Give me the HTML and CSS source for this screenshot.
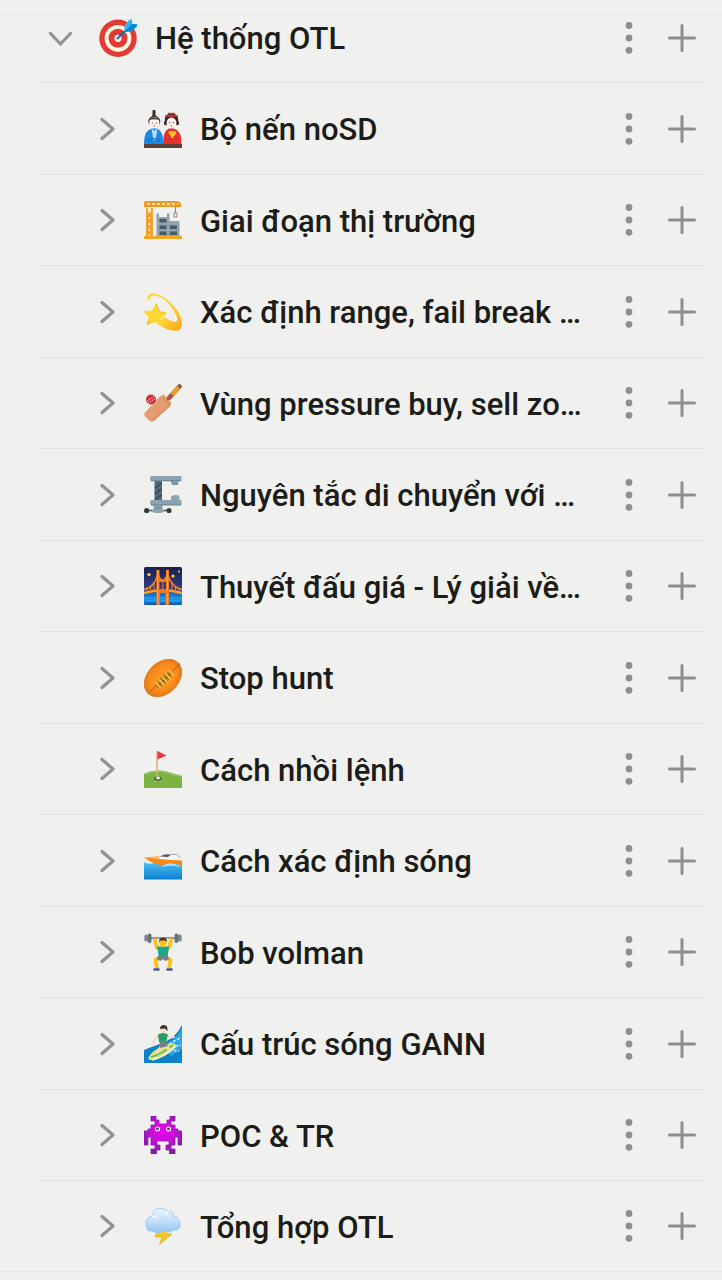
FILE: index.html
```html
<!DOCTYPE html>
<html lang="vi">
<head>
<meta charset="utf-8">
<meta name="viewport" content="width=device-width, initial-scale=1">
<title>Hệ thống OTL</title>
<link rel="stylesheet" href="styles.css">
</head>
<body>
<svg class="sprite" aria-hidden="true">
  <symbol id="right" viewBox="0 0 24 24"><path d="M6 2.500L17 12 6 21.500" fill="none" stroke="currentColor" stroke-width="3.400" stroke-linecap="round" stroke-linejoin="round"/></symbol>
  <symbol id="down" viewBox="0 0 24 24"><path d="M2.500 7.500L12.500 18 22.500 7.500" fill="none" stroke="currentColor" stroke-width="3.200" stroke-linecap="round" stroke-linejoin="round"/></symbol>
  <symbol id="dots" viewBox="0 0 24 36"><g fill="currentColor"><circle cx="12" cy="5.500" r="3.400"/><circle cx="12" cy="18" r="3.400"/><circle cx="12" cy="30.300" r="3.400"/></g></symbol>
  <symbol id="plus" viewBox="0 0 28 28"><path d="M14 1.500v25M1.500 14h25" fill="none" stroke="currentColor" stroke-width="3" stroke-linecap="round"/></symbol>
  <linearGradient id="swoosh" x1="0" y1="0" x2="1" y2="1"><stop offset="0" stop-color="#fdd835"/><stop offset=".6" stop-color="#fdd030"/><stop offset="1" stop-color="#f9a31c"/></linearGradient>
  <linearGradient id="night" x1="0" y1="0" x2="0" y2="1"><stop offset="0" stop-color="#17204f"/><stop offset=".65" stop-color="#3a418b"/><stop offset=".7" stop-color="#1270c4"/><stop offset=".88" stop-color="#1c91e8"/><stop offset="1" stop-color="#0e4f9e"/></linearGradient>
  <radialGradient id="ball"><stop offset="0" stop-color="#ffa02c"/><stop offset=".7" stop-color="#fb8c1a"/><stop offset="1" stop-color="#e57a16"/></radialGradient>
  <linearGradient id="sea" x1="0" y1="0" x2="0" y2="1"><stop offset="0" stop-color="#4fc0f4"/><stop offset="1" stop-color="#0a80d4"/></linearGradient>
  <radialGradient id="alien" cx=".5" cy=".4" r=".6"><stop offset="0" stop-color="#f000f0"/><stop offset=".5" stop-color="#c80fd6"/><stop offset="1" stop-color="#7b1fa2"/></radialGradient>
  <linearGradient id="cloud" x1="0" y1="0" x2="0" y2="1"><stop offset="0" stop-color="#e8f4fe"/><stop offset=".55" stop-color="#bfdffa"/><stop offset="1" stop-color="#8fc4f2"/></linearGradient>
</svg>

<main class="panel">
  <section class="tree">
    <div class="row row-root">
      <button class="toggle" type="button" aria-label="Thu gọn" aria-expanded="true"><svg><use href="#down"/></svg></button>
      <svg class="emoji" viewBox="0 0 38 38" aria-hidden="true">
        <circle cx="19" cy="19.300" r="18.700" fill="#e53935"/><circle cx="19" cy="19.300" r="13.400" fill="#fff8e1"/><circle cx="19" cy="19.300" r="9.500" fill="#e53935"/><circle cx="19" cy="19.300" r="3.600" fill="#fff3e0"/>
        <path d="M18.500 19.500L27 11" stroke="#1769aa" stroke-width="1.900" stroke-linecap="round"/>
        <path d="M25 13L26 5.500 31 .3 33 .5 33.300 5 38 5.300 37.700 7.500 32.500 12.300Z" fill="#29b6f6"/><path d="M25 13L33.300 5 38 5.300 37.700 7.500 32.500 12.300Z" fill="#0288d1"/>
      </svg>
      <span class="title">Hệ thống OTL</span>
      <button class="more" type="button" aria-label="Tùy chọn"><svg><use href="#dots"/></svg></button>
      <button class="add" type="button" aria-label="Thêm trang"><svg><use href="#plus"/></svg></button>
    </div>
    <ul class="children">
      <li class="row">
        <button class="toggle" type="button" aria-label="Mở rộng"><svg><use href="#right"/></svg></button>
        <svg class="emoji" viewBox="0 0 38 38" aria-hidden="true">
          <path d="M7 8L8.500 5V.5Q10 -.7 11.500 .5V5L13.500 8Z" fill="#37322f"/><ellipse cx="10.300" cy="11.500" rx="6" ry="5.500" fill="#3a3030"/><ellipse cx="10.300" cy="13" rx="5.200" ry="5.800" fill="#fff1ec"/><path d="M5.500 10Q10 5.500 15 10Q10 8.500 5.500 10Z" fill="#3a3030"/>
          <path d="M0 34.500Q-.5 20.500 8 18.500H13Q19.500 21 19.500 34.500Z" fill="#1e88e5"/><path d="M7.500 18.500L10.300 21 13.500 18.500 11.500 30H9.500Z" fill="#bbdefb"/><path d="M4 31Q10 26 16 31" fill="none" stroke="#1262ae"/>
          <circle cx="27.500" cy="9.800" r="6.800" fill="#3a2528"/><path d="M21 6H34M24 3.500H31" stroke="#e53935" stroke-width="1.600"/><circle cx="22" cy="13" r="2.200" fill="#3a2528"/><circle cx="33" cy="13" r="2.200" fill="#3a2528"/><ellipse cx="27.500" cy="13" rx="4.900" ry="5.600" fill="#fff1ec"/>
          <path d="M19 34.500Q19 20.500 25 18.500H30Q38 21 37.500 34.500Z" fill="#e5302c"/><path d="M24 22Q28 19.800 32.500 22L30.500 26H29.500V28H27V26Z" fill="#ffca28"/>
          <path d="M8.300 12.500V13.500M12.300 12.500V13.500M25.700 12V13M29.500 12V13" stroke="#3a3030"/><path d="M9.500 16H11M26.700 16H28.300" stroke="#e53935"/><rect y="34" width="38" height="4" fill="#5d4037"/>
        </svg>
        <span class="title">Bộ nến noSD</span>
        <button class="more" type="button" aria-label="Tùy chọn"><svg><use href="#dots"/></svg></button>
        <button class="add" type="button" aria-label="Thêm trang"><svg><use href="#plus"/></svg></button>
      </li>
      <li class="row">
        <button class="toggle" type="button" aria-label="Mở rộng"><svg><use href="#right"/></svg></button>
        <svg class="emoji" viewBox="0 0 38 38" aria-hidden="true">
          <path d="M12.500 35V12.500H15V16H23V12.500H25.500V20H35.500V35Z" fill="#90a4ae"/><path d="M15.500 18H22.500V21.500H15.500ZM15.500 24.500H22.500V28H15.500ZM15.500 30.500H22.500V34H15.500ZM26 24.500H33V28H26ZM26 30.500H33V34H26Z" fill="#455a64"/>
          <path d="M2.500 6H8.500V36H2.500Z" fill="#ffe7b7"/><path d="M3 7V36M8 7V36M3 11L8 17 3 23 8 29 3 35M8 11L3 17 8 23 3 29 8 35" stroke="#f29a20" stroke-width="1.700" fill="none"/>
          <path d="M2 0H33Q37.500 .5 37.500 6H0V2Q0 0 2 0Z" fill="#f39a1e"/><path d="M3 3H34" stroke="#ffe9bd" stroke-width="2.200" stroke-dasharray="3 2"/><path d="M0 35H38V38H0Z" fill="#f2a51f"/><path d="M31.500 6V12M30 12H33V16H30Z" fill="none" stroke="#98836c"/>
        </svg>
        <span class="title">Giai đoạn thị trường</span>
        <button class="more" type="button" aria-label="Tùy chọn"><svg><use href="#dots"/></svg></button>
        <button class="add" type="button" aria-label="Thêm trang"><svg><use href="#plus"/></svg></button>
      </li>
      <li class="row">
        <button class="toggle" type="button" aria-label="Mở rộng"><svg><use href="#right"/></svg></button>
        <svg class="emoji" viewBox="0 0 38 38" aria-hidden="true">
          <path d="M4 7C2.500 5 4 1 8 .5C17-.5 29 10 35 20C39 28 38.500 36 34.500 37.500C28 39 19 35 14.500 31L20 24C25 27 31 30 33 28C34.500 25 30 17 24 10C18 4 11 1 7 3.500Q5.500 4.500 5.500 6Q5 7.800 4 7Z" fill="url(#swoosh)"/>
          <path d="M12.500 10.500L15 18.500 22.500 20 17 25 18 33.500 10.500 28.500 3 31.500 5.500 24.500 0 18.500 8 18Z" fill="#fdd835" stroke="#fdd835" stroke-linejoin="round"/><path d="M12.500 11L15 18.500 21 20.500M6 25L3 31.500 10 28" stroke="#f8bb25" fill="none"/>
        </svg>
        <span class="title">Xác định range, fail break …</span>
        <button class="more" type="button" aria-label="Tùy chọn"><svg><use href="#dots"/></svg></button>
        <button class="add" type="button" aria-label="Thêm trang"><svg><use href="#plus"/></svg></button>
      </li>
      <li class="row">
        <button class="toggle" type="button" aria-label="Mở rộng"><svg><use href="#right"/></svg></button>
        <svg class="emoji" viewBox="0 0 38 38" aria-hidden="true">
          <path d="M25 14L35.500 2.500" stroke="#8d5b3f" stroke-width="4.600" stroke-linecap="round"/><path d="M28 10.700L34.500 3.500" stroke="#efa022" stroke-width="4.200"/>
          <path d="M19.500 10.500L27.500 18.500 26 22.500 10 37Q7.500 38.500 5 36.500L1 32.500Q-.5 30.500 1 28.500L16 12.500Z" fill="#e59b70"/><path d="M18 13L26 21 9 36" fill="none" stroke="#d18055"/><path d="M26.500 9.500L22 17 29 13Z" fill="#a65840"/>
          <circle cx="7" cy="15.500" r="5" fill="#d32f3f"/><path d="M3 17L10 12.500M4 19L11.500 14.500" stroke="#f4d0d0" stroke-width="1" stroke-dasharray="1.500 .7"/>
        </svg>
        <span class="title">Vùng pressure buy, sell zo…</span>
        <button class="more" type="button" aria-label="Tùy chọn"><svg><use href="#dots"/></svg></button>
        <button class="add" type="button" aria-label="Thêm trang"><svg><use href="#plus"/></svg></button>
      </li>
      <li class="row">
        <button class="toggle" type="button" aria-label="Mở rộng"><svg><use href="#right"/></svg></button>
        <svg class="emoji" viewBox="0 0 38 38" aria-hidden="true">
          <path d="M10.500 4H18V28H10.500Z" fill="#536b78"/><path d="M11 12L17.500 7M11 18L17.500 13M11 24L17.500 19" stroke="#38505c" stroke-width="2"/>
          <path d="M7.500 0H37.500V5H34.500V7.500Q34.500 9 31.500 9T27 7.500V5H7.500Q6 5 6 2.500T7.500 0ZM7.500 24H27V21.500Q27 19 31.500 19T35.500 21.500V24H37.500V29H19L18 32 20.500 35Q20 37 14 37T7.500 35L10 32 9 29H7.500Q6 29 6 26.500T7.500 24Z" fill="#8da4af"/><path d="M7 4.800H37M7 29H37M10 32H18M28 8H34" stroke="#668290"/><path d="M3 34.500H8M20 34.500H25" stroke="#455a64" stroke-width="1.600"/><circle cx="2.600" cy="34.500" r="2.600" fill="#353a3d"/><circle cx="25" cy="34.500" r="2.600" fill="#353a3d"/>
        </svg>
        <span class="title">Nguyên tắc di chuyển với …</span>
        <button class="more" type="button" aria-label="Tùy chọn"><svg><use href="#dots"/></svg></button>
        <button class="add" type="button" aria-label="Thêm trang"><svg><use href="#plus"/></svg></button>
      </li>
      <li class="row">
        <button class="toggle" type="button" aria-label="Mở rộng"><svg><use href="#right"/></svg></button>
        <svg class="emoji" viewBox="0 0 38 38" aria-hidden="true">
          <rect width="38" height="38" rx="1.500" fill="url(#night)"/><path d="M0 31H38M3 34H35" stroke="#25a9f2" stroke-width="1"/>
          <path d="M0 22.500Q10 21 14 7Q18.500 20 23.500 7Q28 21 38 22.500" fill="none" stroke="#f58220" stroke-width="1.600"/><path d="M0 26Q19 21 38 26" fill="none" stroke="#ffa02c" stroke-width="2.600"/>
          <path d="M3 22V25M6.500 19V25M10 16V25M18.800 15V24M28 16V25M31.500 19V25M35 22V25" stroke="#f58220"/><path d="M12.500 3H15.500V12H22V3H25V38H21.500V26H16V38H12.500ZM15.500 15V23H22V15Z" fill="#f47b20" fill-rule="evenodd"/><path d="M13.500 3V37M23.500 3V37" stroke="#ffa83a"/>
          <g fill="#fdd835"><circle cx="5" cy="7.500" r="1.600"/><circle cx="29" cy="9" r="1.600"/><circle cx="35" cy="4.500" r="1"/></g>
        </svg>
        <span class="title">Thuyết đấu giá - Lý giải về…</span>
        <button class="more" type="button" aria-label="Tùy chọn"><svg><use href="#dots"/></svg></button>
        <button class="add" type="button" aria-label="Thêm trang"><svg><use href="#plus"/></svg></button>
      </li>
      <li class="row">
        <button class="toggle" type="button" aria-label="Mở rộng"><svg><use href="#right"/></svg></button>
        <svg class="emoji" viewBox="0 0 38 38" aria-hidden="true">
          <ellipse cx="19" cy="19" rx="21.500" ry="15.500" transform="rotate(-45 19 19)" fill="url(#ball)" stroke="#d87a22" stroke-width=".8"/><path d="M3.500 35L12 27M29 12L35.500 4.500" stroke="#9b6226" stroke-width="1"/><path d="M11.500 26.500Q14 17 27.500 11.500Q29 13.500 29 15.500Q23 25 14 29.500Z" fill="#c77a20"/><path d="M14 27L27 14" stroke="#7d572b" stroke-width="1.200"/><path d="M12.500 24L16 28M15.500 21L19.500 25.500M18.500 18L22.500 22.500M22 15L26 19.500M25.500 12L29 16" stroke="#f6c94d" stroke-width="1.800" stroke-linecap="round"/>
        </svg>
        <span class="title">Stop hunt</span>
        <button class="more" type="button" aria-label="Tùy chọn"><svg><use href="#dots"/></svg></button>
        <button class="add" type="button" aria-label="Thêm trang"><svg><use href="#plus"/></svg></button>
      </li>
      <li class="row">
        <button class="toggle" type="button" aria-label="Mở rộng"><svg><use href="#right"/></svg></button>
        <svg class="emoji" viewBox="0 0 38 38" aria-hidden="true">
          <path d="M0 24Q13 18 26 22.500L38 26V38H0Z" fill="#7cb342"/><path d="M1 24Q13 19 26 23.500L37 26.500" stroke="#93c466" stroke-width="1.500" fill="none"/><ellipse cx="13.800" cy="28.500" rx="3.800" ry="2" fill="#49683a"/><ellipse cx="14" cy="28" rx="2" ry="1.200" fill="#fff"/><path d="M13 1V28" stroke="#deb183" stroke-width="1.500"/><path d="M13.500 1L22.500 5.500 13.500 9.500Z" fill="#e53945"/>
        </svg>
        <span class="title">Cách nhồi lệnh</span>
        <button class="more" type="button" aria-label="Tùy chọn"><svg><use href="#dots"/></svg></button>
        <button class="add" type="button" aria-label="Thêm trang"><svg><use href="#plus"/></svg></button>
      </li>
      <li class="row">
        <button class="toggle" type="button" aria-label="Mở rộng"><svg><use href="#right"/></svg></button>
        <svg class="emoji" viewBox="0 0 38 38" aria-hidden="true">
          <path d="M0 20Q4 23 10 21Q22 19 38 20.500V37.500H0Z" fill="url(#sea)"/><path d="M0 15.500L17 14 24 12H33L38 18V20H14Z" fill="#f2f4f5"/><path d="M0 15Q17 17.500 38 18.500V24Q28 19 18 23.500Q6 21 0 15Z" fill="#f88917"/><path d="M1 15.200L16 14 15 17Z" fill="#ffb45e"/><path d="M16 14.500Q20 11.500 27 12.500L24 15Z" fill="#455a64"/><path d="M25 12.500H33L36 16" fill="none" stroke="#9eabb3"/><path d="M17 25Q26 18 37 25Q27 22 17 25Z" fill="#b4e5fb"/>
        </svg>
        <span class="title">Cách xác định sóng</span>
        <button class="more" type="button" aria-label="Tùy chọn"><svg><use href="#dots"/></svg></button>
        <button class="add" type="button" aria-label="Thêm trang"><svg><use href="#plus"/></svg></button>
      </li>
      <li class="row">
        <button class="toggle" type="button" aria-label="Mở rộng"><svg><use href="#right"/></svg></button>
        <svg class="emoji" viewBox="0 0 38 38" aria-hidden="true">
          <path d="M1 5H37" stroke="#748087" stroke-width="1.600"/><path d="M2 3V7M36 3V7" stroke="#78858c" stroke-width="3.200" stroke-linecap="round"/><path d="M5.500 2.500V8M32.500 2.500V8" stroke="#66737b" stroke-width="4" stroke-linecap="round"/>
          <path d="M10.500 5.500L13 14.500 17 17M27.500 5.500L25 14.500 21 17M15 25L11.500 27 13 35.500M23 25L26.500 27 25 35.500" fill="none" stroke="#fcc21b" stroke-width="3.800" stroke-linejoin="round"/>
          <path d="M13 13.500H25L23.500 25H15Z" fill="#19a98d"/><path d="M15 22.500H23L25.500 26 21.500 28 19 26 16.500 28 12.500 26Z" fill="#737d84"/><ellipse cx="19" cy="9.500" rx="3.800" ry="4.500" fill="#fcc21b"/><path d="M15 9Q15 4.500 19 4.500T23 9L21 7.500H17Z" fill="#4b352b"/><path d="M10.500 36.500H14.500M23.500 36.500H27.500" stroke="#4355a5" stroke-width="2.600" stroke-linecap="round"/>
        </svg>
        <span class="title">Bob volman</span>
        <button class="more" type="button" aria-label="Tùy chọn"><svg><use href="#dots"/></svg></button>
        <button class="add" type="button" aria-label="Thêm trang"><svg><use href="#plus"/></svg></button>
      </li>
      <li class="row">
        <button class="toggle" type="button" aria-label="Mở rộng"><svg><use href="#right"/></svg></button>
        <svg class="emoji" viewBox="0 0 38 38" aria-hidden="true">
          <path d="M0 25Q12 20 20 17.500Q32 12 38 0V38H0Z" fill="#0d82cb"/><path d="M19 21Q31 16 38 3V24L27 31Z" fill="#2fa4e5"/><path d="M25 19L36 13M27 22L37 20M25 25L35 26" stroke="#c3e9fb" stroke-width="1.500" stroke-dasharray="3 1.500"/>
          <path d="M4 33Q8 25 23 19Q31 17 32 20Q29 28 14 34Q6 37 4 33Z" fill="#dce46a"/><path d="M7 32Q18 29 29 20" fill="none" stroke="#4caf75" stroke-width="1.500"/><path d="M8 35Q22 31 32 21" fill="none" stroke="#eef6f9" stroke-width="1.600"/>
          <path d="M15 10L11 14.500 8.500 19M22 10L26 12.500 30 12" fill="none" stroke="#f7dac8" stroke-width="2.200" stroke-linecap="round"/><path d="M17 22L13 28M22 20L25 25" stroke="#f7dac8" stroke-width="3"/><path d="M14 9.500Q19 6.500 24 9.500L22 17H15Z" fill="#229e6d"/><path d="M15.500 16H22L24 21 16 23Z" fill="#758087"/><circle cx="19.500" cy="4.500" r="3.500" fill="#f9ddcc"/><path d="M16 4Q16 0 20 0T23.500 6L21 3.500Z" fill="#363333"/>
        </svg>
        <span class="title">Cấu trúc sóng GANN</span>
        <button class="more" type="button" aria-label="Tùy chọn"><svg><use href="#dots"/></svg></button>
        <button class="add" type="button" aria-label="Thêm trang"><svg><use href="#plus"/></svg></button>
      </li>
      <li class="row">
        <button class="toggle" type="button" aria-label="Mở rộng"><svg><use href="#right"/></svg></button>
        <svg class="emoji" viewBox="0 0 38 38" aria-hidden="true">
          <path d="M7 0H12V4H15V8H23V4H26V0H31V5H27V9H31V13H34V15H38V29H34V21H31V29H27V33H31V38H25.500V34H22V29H25V25H13V29H16V34H12.500V38H7V33H11V29H7V21H4V29H0V15H4V13H7V9H11V5H7Z" fill="url(#alien)" stroke="#8d18ae" stroke-width=".8"/><circle cx="13.500" cy="13" r="2.500" fill="#fff"/><circle cx="24.500" cy="13" r="2.500" fill="#fff"/><circle cx="13.500" cy="13" r="1.400" fill="#5b277b"/><circle cx="24.500" cy="13" r="1.400" fill="#5b277b"/>
        </svg>
        <span class="title">POC &amp; TR</span>
        <button class="more" type="button" aria-label="Tùy chọn"><svg><use href="#dots"/></svg></button>
        <button class="add" type="button" aria-label="Thêm trang"><svg><use href="#plus"/></svg></button>
      </li>
      <li class="row">
        <button class="toggle" type="button" aria-label="Mở rộng"><svg><use href="#right"/></svg></button>
        <svg class="emoji" viewBox="0 0 38 38" aria-hidden="true">
          <path d="M14 23H25L20.500 27H28L15.500 37.500 18 30H11Z" fill="#f5ca20" stroke="#d9a928" stroke-width=".7"/><path d="M8 24C4 25 1.500 21.500 2 18C1 13 4 9.500 8 9.500C8 4 12 1 16 1.500C20 1 23 2.500 24.500 4.500C28 3.500 30 6 29.500 9.500C34 10 36.500 13 36 16.500C37 21 33 24.500 29 23C26 26 22 25.500 20 24C16 26 11 26 8 24Z" fill="url(#cloud)" stroke="#9fc8ea" stroke-width=".8"/><path d="M8 9.500Q12 9 13.500 11M24.500 4.500Q22 5.500 22 8" fill="none" stroke="#fff" stroke-width="1.200"/>
        </svg>
        <span class="title">Tổng hợp OTL</span>
        <button class="more" type="button" aria-label="Tùy chọn"><svg><use href="#dots"/></svg></button>
        <button class="add" type="button" aria-label="Thêm trang"><svg><use href="#plus"/></svg></button>
      </li>
    </ul>
  </section>
</main>
</body>
</html>
```

FILE: styles.css
```css
* {
  box-sizing: border-box;
}

body {
  margin: 0;
  background: #f0f0ee;
  color: #1c1c19;
  font-family: Roboto, "Noto Sans", sans-serif;
}

.sprite {
  position: absolute;
  width: 0;
  height: 0;
}

.panel {
  padding-top: 14px;
}

.tree {
  border-top: 1px solid #e5e5e3;
  border-bottom: 1px solid #e5e5e3;
}

.children {
  margin: 0;
  padding: 0;
  list-style: none;
}

.row {
  display: flex;
  align-items: center;
  height: 91px;
  margin: 0 17px 0 38px;
  padding: 0 9px 0 58px;
  border-bottom: 1px solid #e2e2e0;
}

.children .row:nth-child(odd) {
  height: 92px;
}

.children .row:last-child {
  height: 90px;
  border-bottom: 0;
}

.row-root {
  height: 68px;
  padding: 0 9px 22px 10px;
}

button {
  display: block;
  flex: none;
  margin: 0;
  padding: 0;
  border: 0;
  background: none;
  color: #8e8e8a;
  cursor: pointer;
}

button svg {
  display: block;
  width: 100%;
  height: 100%;
}

.toggle {
  width: 24px;
  height: 24px;
  margin-right: 24px;
  color: #939391;
}

.row-root .toggle {
  margin-right: 27px;
}

.emoji {
  flex: none;
  width: 38px;
  height: 38px;
  margin-right: 18px;
}

.title {
  flex: 1;
  min-width: 0;
  padding-top: 3px;
  overflow: hidden;
  font-size: 31px;
  font-weight: 500;
  line-height: 44px;
  text-overflow: ellipsis;
  white-space: nowrap;
}

.more {
  width: 24px;
  height: 36px;
  margin: 0 27px 0 20px;
}

.add {
  width: 28px;
  height: 28px;
}
```
